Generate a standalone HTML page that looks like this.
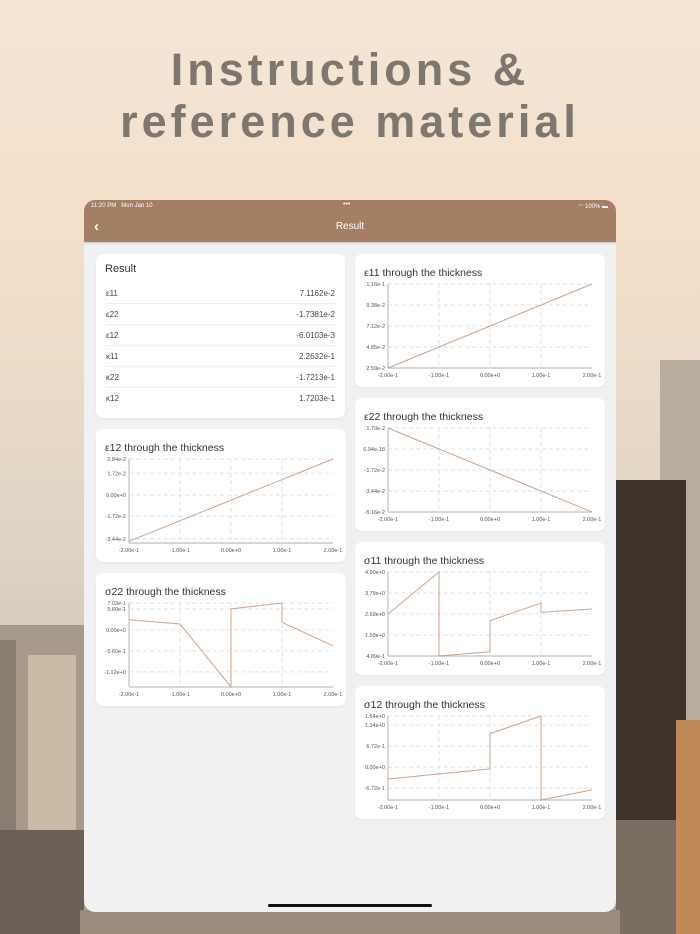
<!DOCTYPE html>
<html><head><meta charset="utf-8"><style>
*{margin:0;padding:0;box-sizing:border-box}
body{width:700px;height:934px;overflow:hidden;position:relative;font-family:"Liberation Sans",sans-serif;
background:linear-gradient(180deg,#f4e6d6 0%,#f3dfca 25%,#e8dac8 45%,#ddd2c3 60%,#cfc4b6 75%,#a79c8e 100%);}
.t{position:absolute;left:0;width:700px;text-align:center;color:#7d7770;font-size:45px;font-weight:bold;letter-spacing:4px}
.b{position:absolute;}
.dev{position:absolute;left:84px;top:200px;width:532px;height:712px;border-radius:11px;background:#f1f1f1;overflow:hidden}
.hdr{position:absolute;left:0;top:0;width:532px;height:42px;background:#a47f64;color:#fff;box-shadow:0 1px 2px rgba(0,0,0,.2)}
.card{position:absolute;background:#fff;border-radius:7px;box-shadow:0 1px 2px rgba(0,0,0,.06)}
.row{position:absolute;left:10px;right:10px;height:21px;border-bottom:1px solid #eee;font-size:8px;color:#444;line-height:21px}
.row span{float:right}
</style></head><body>
<div class="t" style="top:44px">Instructions &amp;</div>
<div class="t" style="top:96px">reference material</div>
<!-- buildings left -->
<div class="b" style="left:0;top:625px;width:84px;height:309px;background:#a89a8a"></div>
<div class="b" style="left:28px;top:655px;width:48px;height:279px;background:#c9b9a5"></div>
<div class="b" style="left:0;top:640px;width:16px;height:294px;background:#8a7e72"></div>
<div class="b" style="left:0;top:830px;width:84px;height:104px;background:#6a6058"></div>
<!-- right -->
<div class="b" style="left:660px;top:360px;width:40px;height:574px;background:#b9ad9e"></div>
<div class="b" style="left:616px;top:480px;width:70px;height:454px;background:#3e342c"></div>
<div class="b" style="left:676px;top:720px;width:24px;height:214px;background:#c08a58"></div>
<div class="b" style="left:616px;top:820px;width:60px;height:114px;background:#7a6e63"></div>
<div class="b" style="left:80px;top:910px;width:540px;height:24px;background:#9a8b7b"></div>
<div class="dev">
 <div class="hdr">
  <div style="position:absolute;left:7px;top:3px;font-size:6px">11:20 PM&nbsp;&nbsp; Mon Jan 10</div>
  <div style="position:absolute;left:259px;top:1px;font-size:7px">•••</div>
  <div style="position:absolute;right:8px;top:3px;font-size:6px">◠ 100% ▬</div>
  <div style="position:absolute;left:10px;top:18px;font-size:15px;font-weight:bold">‹</div>
  <div style="position:absolute;left:0;width:532px;top:21px;text-align:center;font-size:10px">Result</div>
 </div>
 <div class="card" style="left:12px;top:54px;width:249px;height:164px">
  <div style="position:absolute;left:9px;top:9px;font-size:11px;color:#333">Result</div>
  <div class="row" style="top:29px">ε11<span>7.1162e-2</span></div>
  <div class="row" style="top:50px">ε22<span>-1.7381e-2</span></div>
  <div class="row" style="top:71px">ε12<span>-6.0103e-3</span></div>
  <div class="row" style="top:92px">κ11<span>2.2632e-1</span></div>
  <div class="row" style="top:113px">κ22<span>-1.7213e-1</span></div>
  <div class="row" style="top:134px;border:none">κ12<span>1.7203e-1</span></div>
 </div>
 <div id="charts"></div>
 <div style="position:absolute;left:184px;top:704px;width:164px;height:3px;border-radius:2px;background:#111"></div>
</div>
<script>
function chart(x,y,title,labs,pts){
 var W=250,H=133,L=33,R=237,T=30,B=114,h=B-T,w=R-L;
 var s='<svg width="'+W+'" height="'+H+'" style="position:absolute;left:0;top:0">';
 s+='<text x="9" y="22" font-size="10.5" fill="#333" font-family="Liberation Sans">'+title+'</text>';
 [-.1,0,.1].forEach(function(v){var px=L+(v+.2)/.4*w;s+='<line x1="'+px+'" y1="'+T+'" x2="'+px+'" y2="'+B+'" stroke="#dde3e8" stroke-dasharray="4,3"/>'});
 labs.forEach(function(l){var py=B-l[1]*h;s+='<line x1="'+L+'" y1="'+py+'" x2="'+R+'" y2="'+py+'" stroke="#dde3e8" stroke-dasharray="4,3"/><text x="'+(L-3)+'" y="'+(py+2)+'" font-size="5.5" text-anchor="end" fill="#555" font-family="Liberation Sans">'+l[0]+'</text>'});
 ['-2.00e-1','-1.00e-1','0.00e+0','1.00e-1','2.00e-1'].forEach(function(t,i){s+='<text x="'+(L+i*w/4)+'" y="'+(B+9)+'" font-size="5.5" text-anchor="middle" fill="#555" font-family="Liberation Sans">'+t+'</text>'});
 s+='<line x1="'+L+'" y1="'+T+'" x2="'+L+'" y2="'+B+'" stroke="#ccc" stroke-width="1.5"/><line x1="'+L+'" y1="'+B+'" x2="'+R+'" y2="'+B+'" stroke="#ccc" stroke-width="1.5"/>';
 s+='<polyline fill="none" stroke="#c9a48a" stroke-width="1" points="'+pts.map(function(p){return (L+(p[0]+.2)/.4*w)+','+(B-p[1]*h)}).join(' ')+'"/></svg>';
 return '<div class="card" style="left:'+x+'px;top:'+y+'px;width:'+W+'px;height:'+H+'px">'+s+'</div>';
}
var c='';
c+=chart(271,54,'ε11 through the thickness',[['1.16e-1',1],['9.38e-2',.75],['7.12e-2',.5],['4.85e-2',.25],['2.59e-2',0]],[[-.2,0],[.2,1]]);
c+=chart(271,198,'ε22 through the thickness',[['1.70e-2',1],['6.94e-18',.75],['-1.72e-2',.5],['-3.44e-2',.25],['-5.16e-2',0]],[[-.2,1],[.2,0]]);
c+=chart(271,342,'σ11 through the thickness',[['4.90e+0',1],['3.79e+0',.75],['2.69e+0',.5],['1.59e+0',.25],['4.89e-1',0]],[[-.2,.5],[-.1,1],[-.1,0],[0,.05],[0,.42],[.1,.63],[.1,.52],[.2,.56]]);
c+=chart(271,486,'σ12 through the thickness',[['1.64e+0',1],['1.34e+0',.89],['6.72e-1',.64],['0.00e+0',.39],['-6.72e-1',.14]],[[-.2,.25],[0,.37],[0,.79],[.1,1],[.1,0],[.2,.12]]);
c+=chart(12,229,'ε12 through the thickness',[['2.84e-2',1],['1.72e-2',.83],['0.00e+0',.57],['-1.72e-2',.32],['-3.44e-2',.05]],[[-.2,.02],[.2,1]]);
c+=chart(12,373,'σ22 through the thickness',[['7.03e-1',1],['5.60e-1',.93],['0.00e+0',.68],['-5.60e-1',.43],['-1.12e+0',.18]],[[-.2,.8],[-.1,.75],[0,0],[0,.93],[.1,1],[.1,.77],[.2,.49]]);
document.getElementById('charts').innerHTML=c;
</script>
</body></html>
